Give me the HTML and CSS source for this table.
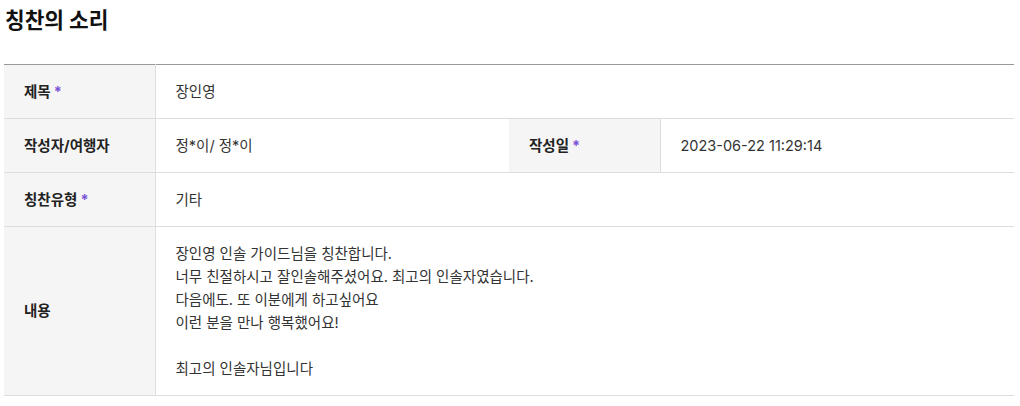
FILE: index.html
```html
<!DOCTYPE html>
<html lang="ko">
<head>
<meta charset="utf-8">
<link rel="stylesheet" href="styles.css">
</head>
<body>
<div class="page">
  <h2 class="title">칭찬의 소리</h2>
  <table class="board">
    <colgroup>
      <col class="c-th"><col class="c-td"><col class="c-th"><col class="c-td">
    </colgroup>
    <tbody>
      <tr>
        <th>제목<span class="req">*</span></th>
        <td colspan="3">장인영</td>
      </tr>
      <tr>
        <th>작성자/여행자</th>
        <td>정*이/ 정*이</td>
        <th>작성일<span class="req">*</span></th>
        <td class="num">2023-06-22 11:29:14</td>
      </tr>
      <tr>
        <th>칭찬유형<span class="req">*</span></th>
        <td colspan="3">기타</td>
      </tr>
      <tr>
        <th>내용</th>
        <td colspan="3" class="content">장인영 인솔 가이드님을 칭찬합니다.<br>너무 친절하시고 잘인솔해주셨어요. 최고의 인솔자였습니다.<br>다음에도. 또 이분에게 하고싶어요<br>이런 분을 만나 행복했어요!<br><br>최고의 인솔자님입니다</td>
      </tr>
    </tbody>
  </table>
</div>
</body>
</html>
```

FILE: styles.css
```css
html, body {
  margin: 0;
  padding: 0;
  background: #fff;
}
body {
  font-family: "Inter", "Noto Sans CJK KR", sans-serif;
  color: #333;
}
.page {
  padding: 4px 6px 0 4px;
}
.title {
  margin: 0 0 0 1px;
  font-size: 21.4px;
  line-height: 32px;
  font-weight: 700;
  color: #111;
  padding-bottom: 28px;
}
.board {
  width: 100%;
  border-collapse: collapse;
  table-layout: fixed;
  border-top: 1px solid #999;
}
.c-th { width: 151px; }
.board th,
.board td {
  height: 53px;
  border-bottom: 1px solid #ddd;
  font-size: 14.5px;
  line-height: 20px;
  text-align: left;
  vertical-align: middle;
  padding: 0 20px;
}
.board th {
  background: #f5f5f5;
  color: #222;
  font-weight: 700;
  border-right: 1px solid #ddd;
}
.board td {
  color: #333;
}
.req {
  color: #7a52d8;
  margin-left: 3px;
  font-weight: 700;
}
.board td.content {
  line-height: 23px;
  padding-top: 15px;
  padding-bottom: 15px;
}
```
